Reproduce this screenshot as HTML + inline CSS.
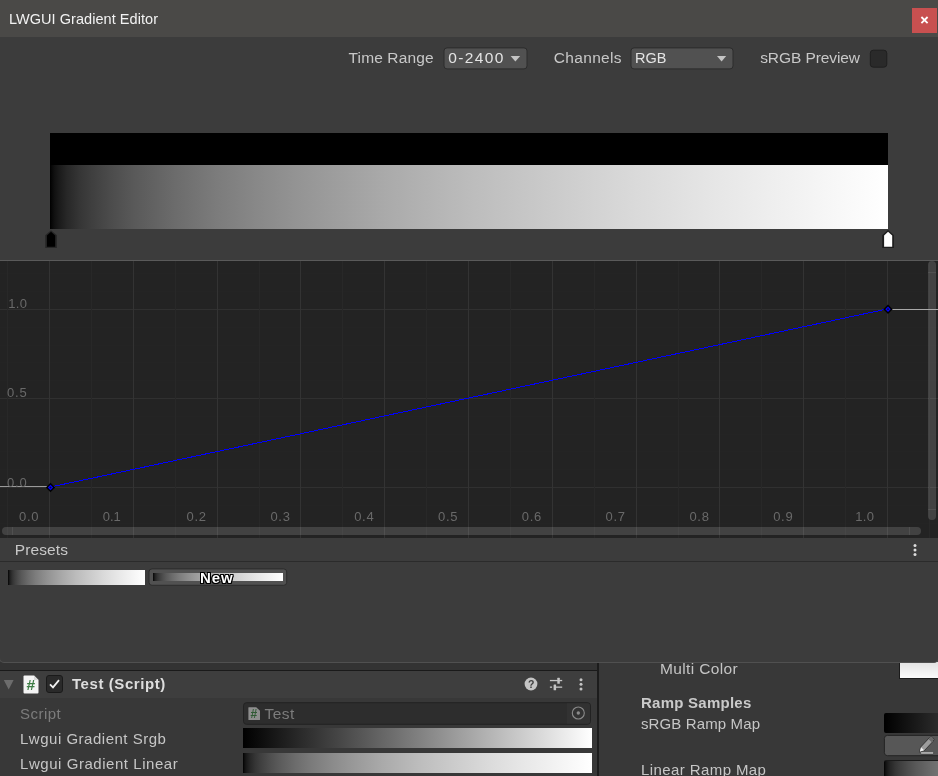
<!DOCTYPE html>
<html>
<head>
<meta charset="utf-8">
<title>LWGUI Gradient Editor</title>
<style>
html,body{margin:0;padding:0;}
body{width:938px;height:776px;overflow:hidden;background:#383838;position:relative;font-family:"Liberation Sans",sans-serif;color:#c8c8c8;}
.abs{position:absolute;}
.t{position:absolute;white-space:nowrap;line-height:1;}
/* ---- inspector (behind) ---- */
#insp-left{left:0;top:662px;width:597px;height:114px;background:#383838;border-top:8px solid #333;box-sizing:border-box;}
#insp-div{left:597px;top:662px;width:2px;height:114px;background:#1c1c1c;}
#insp-right{left:599px;top:662px;width:338px;height:114px;background:#383838;}
#comp-head{left:0;top:670px;width:597px;height:27px;background:#3e3e3e;border-top:1px solid #1a1a1a;}
/* ---- popup window ---- */
#win{left:-1px;top:0;width:940px;height:663px;background:#3c3c3c;border:1px solid #505050;border-top:none;border-bottom-left-radius:5px;border-bottom-right-radius:5px;box-sizing:border-box;}
#titlebar{left:0;top:0;width:938px;height:37px;background:#4a4947;}
#close{left:912px;top:8px;width:25px;height:25px;background:#c85050;}
#graph{left:0;top:260px;width:938px;height:278px;background:#232323;border-top:1px solid #5a5a5a;box-sizing:border-box;overflow:hidden;}
.gl{position:absolute;color:#696969;font-size:13px;white-space:nowrap;line-height:1;}
</style>
</head>
<body>
<div id="root" style="position:absolute;left:0;top:0;width:938px;height:776px;overflow:hidden;will-change:transform;">

<!-- inspector behind -->
<div class="abs" id="insp-left"></div>
<div class="abs" id="insp-right"></div>
<div class="abs" id="insp-div"></div>
<div class="abs" id="comp-head"></div>


<!-- inspector content -->
<svg class="abs" style="left:3.4px;top:679px" width="12" height="12" viewBox="0 0 12 12"><path d="M0.8 1 H10.6 L5.7 10.6 Z" fill="#6c6c6c"/></svg>
<svg class="abs" style="left:23px;top:675px" width="17" height="19" viewBox="0 0 17 19"><path d="M1.5 0.5 H11 L15.5 5 V17.5 Q15.5 18.5 14.5 18.5 H1.5 Q0.5 18.5 0.5 17.5 V1.5 Q0.5 0.5 1.5 0.5 Z" fill="#f4f4f4"/><path d="M11 0.5 L15.5 5 H11 Z" fill="#d8d8d8"/><text x="3.4" y="14.9" font-family="Liberation Sans, sans-serif" font-size="15.5" font-weight="700" fill="#3d7d45">#</text></svg>
<div class="abs" style="left:46px;top:675px;width:17px;height:18px;background:#2a2a2a;border:1px solid #1a1a1a;border-radius:3px;box-sizing:border-box;"></div>
<svg class="abs" style="left:46px;top:675px" width="17" height="18" viewBox="0 0 17 18"><path d="M4 9.3 L7 12.3 L13 5.2" stroke="#f0f0f0" stroke-width="1.8" fill="none"/></svg>
<div class="t" style="left:72px;top:676.1px;font-size:15px;font-weight:700;letter-spacing:0.57px;color:#dedede;">Test (Script)</div>
<svg class="abs" style="left:524px;top:677px" width="14" height="14" viewBox="0 0 14 14"><circle cx="7" cy="7" r="6.4" fill="#c4c4c4"/><text x="4.1" y="10.6" font-family="Liberation Sans, sans-serif" font-size="10.5" font-weight="700" fill="#3e3e3e">?</text></svg>
<svg class="abs" style="left:549px;top:677px" width="14" height="14" viewBox="0 0 14 14" fill="#c4c4c4"><rect x="0.9" y="2.9" width="12.3" height="1.3"/><rect x="8.3" y="0.8" width="2.5" height="5.9" rx="0.5"/><rect x="0.9" y="9.5" width="2.2" height="1.3"/><rect x="4.6" y="7.4" width="2.5" height="5.9" rx="0.5"/><rect x="7" y="9.5" width="6.2" height="1.3"/></svg>
<svg class="abs" style="left:577px;top:677px" width="8" height="15" viewBox="0 0 8 15"><circle cx="4" cy="2.7" r="1.5" fill="#c4c4c4"/><circle cx="4" cy="7.3" r="1.5" fill="#c4c4c4"/><circle cx="4" cy="11.9" r="1.5" fill="#c4c4c4"/></svg>

<div class="t" style="left:20px;top:706.0px;font-size:15px;letter-spacing:0.47px;color:#7c7c7c;">Script</div>
<svg class="abs" style="left:240px;top:700px" width="356" height="28" viewBox="240 700 356 28"><rect x="243.5" y="702.7" width="347" height="21.6" rx="3" fill="#2d2d2d" stroke="#222" stroke-width="1"/><path d="M567 703.2 H587.5 Q590 703.2 590 705.7 V721.3 Q590 723.8 587.5 723.8 H567 Z" fill="#323232"/></svg>
<svg class="abs" style="left:248px;top:707px" width="13" height="14" viewBox="0 0 13 14"><path d="M0.9 0.2 H8.2 L12 3.8 V12.6 Q12 13.1 11.5 13.1 H0.9 Q0.4 13.1 0.4 12.6 V0.7 Q0.4 0.2 0.9 0.2 Z" fill="#8e8e8e"/><text x="2.5" y="11" font-family="Liberation Sans, sans-serif" font-size="12" font-weight="700" fill="#2f5a34">#</text></svg>
<div class="t" style="left:264.6px;top:705.6px;font-size:15.5px;letter-spacing:0.4px;color:#7c7c7c;">Test</div>
<svg class="abs" style="left:571px;top:706px" width="14" height="14" viewBox="0 0 14 14"><circle cx="7.3" cy="7" r="6" fill="none" stroke="#8a8a8a" stroke-width="1.1"/><circle cx="7.3" cy="7" r="1.7" fill="#8a8a8a"/></svg>

<div class="t" style="left:20px;top:731.3px;font-size:15px;letter-spacing:0.51px;color:#c6c6c6;">Lwgui Gradient Srgb</div>
<div class="abs" style="left:243px;top:728px;width:349px;height:20px;background:linear-gradient(to right,#000,#fff);"></div>
<div class="t" style="left:20px;top:755.9px;font-size:15px;letter-spacing:0.55px;color:#c6c6c6;">Lwgui Gradient Linear</div>
<div class="abs" style="left:243px;top:753px;width:349px;height:20px;background:linear-gradient(to right,rgb(0,0,0) 0%,rgb(7,7,7) 0.2%,rgb(16,16,16) 0.5%,rgb(25,25,25) 1%,rgb(39,39,39) 2%,rgb(53,53,53) 3.5%,rgb(63,63,63) 5%,rgb(77,77,77) 7.5%,rgb(89,89,89) 10%,rgb(108,108,108) 15%,rgb(124,124,124) 20%,rgb(137,137,137) 25%,rgb(149,149,149) 30%,rgb(170,170,170) 40%,rgb(188,188,188) 50%,rgb(203,203,203) 60%,rgb(218,218,218) 70%,rgb(231,231,231) 80%,rgb(243,243,243) 90%,rgb(255,255,255) 100%);"></div>

<div class="t" style="left:660px;top:660.7px;font-size:15.5px;letter-spacing:0.36px;color:#c4c4c4;">Multi Color</div>
<div class="abs" style="left:899px;top:662px;width:45px;height:17px;background:linear-gradient(to bottom,#e2e2e2,#fafafa);border:1px solid #1a1a1a;border-top:none;box-sizing:border-box;"></div>
<div class="t" style="left:641px;top:695.4px;font-size:15px;font-weight:700;letter-spacing:0.25px;color:#cacaca;">Ramp Samples</div>
<div class="t" style="left:641px;top:715.9px;font-size:15px;letter-spacing:0.12px;color:#c6c6c6;">sRGB Ramp Map</div>
<div class="abs" style="left:884px;top:713px;width:60px;height:20px;border-radius:2px;background:linear-gradient(to right,#000 0,#2b2b2b 54px);"></div>
<svg class="abs" style="left:878px;top:730px" width="60" height="30" viewBox="878 730 60 30">
<rect x="884.4" y="735.4" width="70" height="20.3" rx="3" fill="#575757" stroke="#242424" stroke-width="1"/>
<g transform="translate(919.4 752.2) rotate(-47)">
<path d="M0 0 L4.6 -2.6 H17.5 Q20 -2.6 20 0 Q20 2.6 17.5 2.6 H4.6 Z" fill="#9c9c9c" stroke="#343434" stroke-width="0.9"/>
<path d="M0.6 0 L4.6 -2.2 V2.2 Z" fill="#f0f0f0"/>
<path d="M15.8 -2.2 H17.6 Q19.6 -2.2 19.6 0 Q19.6 2.2 17.6 2.2 H15.8 Z" fill="#6a6a6a"/>
</g>
<rect x="920.5" y="751.8" width="13.2" height="2.3" rx="1" fill="#c6c6c6" stroke="#3a3a3a" stroke-width="0.7"/>
</svg>
<div class="t" style="left:641px;top:761.6px;font-size:15px;letter-spacing:0.41px;color:#c6c6c6;">Linear Ramp Map</div>
<div class="abs" style="left:884px;top:760px;width:60px;height:20px;border-radius:2px;background:linear-gradient(to right,rgb(0,0,0) 0.0px,rgb(7,7,7) 0.6px,rgb(16,16,16) 1.6px,rgb(25,25,25) 3.2px,rgb(39,39,39) 6.4px,rgb(53,53,53) 11.3px,rgb(63,63,63) 16.1px,rgb(77,77,77) 24.1px,rgb(89,89,89) 32.2px,rgb(108,108,108) 48.3px,rgb(124,124,124) 64.4px,rgb(137,137,137) 80.5px,rgb(149,149,149) 96.6px);border-top:1px solid #1a1a1a;box-sizing:border-box;"></div>

<!-- popup -->
<div class="abs" id="win"></div>
<div class="abs" id="titlebar"></div>
<div class="t" id="title" style="left:9px;top:12px;font-size:14.5px;letter-spacing:0.05px;color:#f2f2f2;">LWGUI Gradient Editor</div>
<div class="abs" id="close"></div>
<svg class="abs" style="left:912px;top:8px" width="25" height="25" viewBox="0 0 25 25"><path d="M9.4 9 L15.6 15.2 M15.6 9 L9.4 15.2" stroke="#fff" stroke-width="1.8" fill="none"/></svg>

<!-- toolbar -->
<svg class="abs" style="left:0;top:40px" width="938" height="40" viewBox="0 40 938 40">
<rect x="444" y="47.9" width="83" height="21" rx="3" fill="#515151" stroke="#2c2c2c" stroke-width="1"/>
<rect x="631" y="47.9" width="102" height="21" rx="3" fill="#515151" stroke="#2c2c2c" stroke-width="1"/>
<rect x="870.3" y="50.2" width="16.5" height="17" rx="3" fill="#2a2a2a" stroke="#1f1f1f" stroke-width="1"/>
<path d="M510.6 56.1 H520.2 L515.4 61.5 Z" fill="#c4c4c4"/>
<path d="M717 56.1 H726.2 L721.6 61.5 Z" fill="#c4c4c4"/>
</svg>
<div class="t" style="left:348.6px;top:50.3px;font-size:15.5px;letter-spacing:0.12px;">Time Range</div>
<div class="t" style="left:448.3px;top:49.6px;font-size:15.5px;letter-spacing:1.37px;color:#e4e4e4;">0-2400</div>
<div class="t" style="left:553.8px;top:50.3px;font-size:15.5px;letter-spacing:0.33px;">Channels</div>
<div class="t" style="left:634.6px;top:49.6px;font-size:15.5px;color:#e4e4e4;transform:scaleX(0.935);transform-origin:0 0;">RGB</div>
<div class="t" style="left:760.2px;top:50.3px;font-size:15.5px;letter-spacing:-0.09px;">sRGB Preview</div>

<!-- gradient preview -->
<div class="abs" style="left:50px;top:133px;width:838px;height:32px;background:#000;"></div>
<div class="abs" style="left:50px;top:165px;width:838px;height:64px;background:linear-gradient(to right,rgb(0,0,0) 0%,rgb(7,7,7) 0.2%,rgb(16,16,16) 0.5%,rgb(25,25,25) 1%,rgb(39,39,39) 2%,rgb(53,53,53) 3.5%,rgb(63,63,63) 5%,rgb(77,77,77) 7.5%,rgb(89,89,89) 10%,rgb(108,108,108) 15%,rgb(124,124,124) 20%,rgb(137,137,137) 25%,rgb(149,149,149) 30%,rgb(170,170,170) 40%,rgb(188,188,188) 50%,rgb(203,203,203) 60%,rgb(218,218,218) 70%,rgb(231,231,231) 80%,rgb(243,243,243) 90%,rgb(255,255,255) 100%);"></div>
<svg class="abs" style="left:44px;top:229px" width="16" height="21" viewBox="0 0 16 21"><path d="M7 1.2 L12.9 6.3 V18.9 H1.2 V6.3 Z" fill="#272727"/><path d="M7 2.8 L11.2 6.6 V17.7 H2.9 V6.6 Z" fill="#000"/></svg>
<svg class="abs" style="left:881px;top:229px" width="16" height="21" viewBox="0 0 16 21"><path d="M7.05 1 L12.9 6.2 V18.9 H1.2 V6.2 Z" fill="#1c1c1c"/><path d="M7.05 2.8 L11.2 6.6 V17.8 H3.1 V6.6 Z" fill="#fff"/></svg>

<!-- curve graph -->
<div class="abs" id="graph">
<svg class="abs" style="left:0;top:0" width="938" height="277" viewBox="0 261 938 277">
<g shape-rendering="crispEdges">
<rect x="0" y="523" width="938" height="1" fill="#242424"/>
<rect x="0" y="505" width="938" height="1" fill="#242424"/>
<rect x="0" y="487" width="938" height="1" fill="#303030"/>
<rect x="0" y="469" width="938" height="1" fill="#242424"/>
<rect x="0" y="451" width="938" height="1" fill="#242424"/>
<rect x="0" y="434" width="938" height="1" fill="#242424"/>
<rect x="0" y="416" width="938" height="1" fill="#242424"/>
<rect x="0" y="398" width="938" height="1" fill="#303030"/>
<rect x="0" y="380" width="938" height="1" fill="#242424"/>
<rect x="0" y="362" width="938" height="1" fill="#242424"/>
<rect x="0" y="345" width="938" height="1" fill="#242424"/>
<rect x="0" y="327" width="938" height="1" fill="#242424"/>
<rect x="0" y="309" width="938" height="1" fill="#303030"/>
<rect x="0" y="291" width="938" height="1" fill="#242424"/>
<rect x="0" y="273" width="938" height="1" fill="#242424"/>
<rect x="7" y="261" width="1" height="277" fill="#282828"/>
<rect x="49" y="261" width="1" height="277" fill="#333333"/>
<rect x="91" y="261" width="1" height="277" fill="#282828"/>
<rect x="133" y="261" width="1" height="277" fill="#333333"/>
<rect x="175" y="261" width="1" height="277" fill="#282828"/>
<rect x="217" y="261" width="1" height="277" fill="#333333"/>
<rect x="259" y="261" width="1" height="277" fill="#282828"/>
<rect x="300" y="261" width="1" height="277" fill="#333333"/>
<rect x="342" y="261" width="1" height="277" fill="#282828"/>
<rect x="384" y="261" width="1" height="277" fill="#333333"/>
<rect x="426" y="261" width="1" height="277" fill="#282828"/>
<rect x="468" y="261" width="1" height="277" fill="#333333"/>
<rect x="510" y="261" width="1" height="277" fill="#282828"/>
<rect x="552" y="261" width="1" height="277" fill="#333333"/>
<rect x="594" y="261" width="1" height="277" fill="#282828"/>
<rect x="636" y="261" width="1" height="277" fill="#333333"/>
<rect x="678" y="261" width="1" height="277" fill="#282828"/>
<rect x="719" y="261" width="1" height="277" fill="#333333"/>
<rect x="761" y="261" width="1" height="277" fill="#282828"/>
<rect x="803" y="261" width="1" height="277" fill="#333333"/>
<rect x="845" y="261" width="1" height="277" fill="#282828"/>
<rect x="887" y="261" width="1" height="277" fill="#333333"/>
<rect x="929" y="261" width="1" height="277" fill="#282828"/>
</g>
<rect x="2" y="527" width="919" height="8" rx="4" fill="#fff" fill-opacity="0.145"/>
<rect x="12" y="527" width="1" height="8" fill="#fff" fill-opacity="0.08" shape-rendering="crispEdges"/>
<rect x="909" y="527" width="1" height="8" fill="#fff" fill-opacity="0.08" shape-rendering="crispEdges"/>
<rect x="928" y="261" width="8" height="259" rx="4" fill="#fff" fill-opacity="0.145"/>
<rect x="928" y="272" width="8" height="1" fill="#fff" fill-opacity="0.08" shape-rendering="crispEdges"/>
<rect x="928" y="509" width="8" height="1" fill="#fff" fill-opacity="0.08" shape-rendering="crispEdges"/>
<rect x="0" y="486" width="47" height="1" fill="#9a9a9a" shape-rendering="crispEdges"/>
<rect x="892" y="309" width="46" height="1" fill="#a8a8a8" shape-rendering="crispEdges"/>
<line x1="50.5" y1="487.0" x2="888" y2="308.8" stroke="#0000ff" stroke-width="1" shape-rendering="crispEdges"/>
<path d="M50.5 482.8 L55.2 487.5 L50.5 492.2 L45.8 487.5 Z" fill="#000"/>
<path d="M50.5 484.8 L53.2 487.5 L50.5 490.2 L47.8 487.5 Z" fill="#0000ff"/>
<path d="M50.5 486.4 L51.6 487.5 L50.5 488.6 L49.4 487.5 Z" fill="#0a0a30"/>
<path d="M888 304.5 L892.7 309.2 L888 313.9 L883.3 309.2 Z" fill="#000"/>
<path d="M888 306.5 L890.7 309.2 L888 311.9 L885.3 309.2 Z" fill="#0000ff"/>
<path d="M888 308.09999999999997 L889.1 309.2 L888 310.3 L886.9 309.2 Z" fill="#0a0a30"/>
</svg>
<div class="gl" style="left:8.3px;top:36.0px;letter-spacing:0.3px;">1.0</div>
<div class="gl" style="left:6.9px;top:125.0px;letter-spacing:0.9px;">0.5</div>
<div class="gl" style="left:6.9px;top:215.0px;letter-spacing:0.9px;">0.0</div>
<div class="gl" style="left:19.0px;top:249.0px;letter-spacing:0.7px;">0.0</div>
<div class="gl" style="left:102.8px;top:249.0px;letter-spacing:-0.1px;">0.1</div>
<div class="gl" style="left:186.6px;top:249.0px;letter-spacing:0.7px;">0.2</div>
<div class="gl" style="left:270.4px;top:249.0px;letter-spacing:0.7px;">0.3</div>
<div class="gl" style="left:354.2px;top:249.0px;letter-spacing:0.7px;">0.4</div>
<div class="gl" style="left:438.0px;top:249.0px;letter-spacing:0.7px;">0.5</div>
<div class="gl" style="left:521.8px;top:249.0px;letter-spacing:0.7px;">0.6</div>
<div class="gl" style="left:605.6px;top:249.0px;letter-spacing:0.7px;">0.7</div>
<div class="gl" style="left:689.4px;top:249.0px;letter-spacing:0.7px;">0.8</div>
<div class="gl" style="left:773.2px;top:249.0px;letter-spacing:0.7px;">0.9</div>
<div class="gl" style="left:855.3px;top:249.0px;letter-spacing:0.3px;">1.0</div>
</div>

<!-- presets -->
<div class="abs" style="left:0;top:561px;width:938px;height:1px;background:#2b2b2b;"></div>
<div class="t" style="left:14.8px;top:541.6px;font-size:15.5px;letter-spacing:0.1px;">Presets</div>
<svg class="abs" style="left:911px;top:542px" width="8" height="16" viewBox="0 0 8 16"><circle cx="4" cy="3.4" r="1.5" fill="#dcdcdc"/><circle cx="4" cy="8" r="1.5" fill="#dcdcdc"/><circle cx="4" cy="12.5" r="1.5" fill="#dcdcdc"/></svg>
<div class="abs" style="left:8px;top:570px;width:137px;height:15px;background:linear-gradient(to right,rgb(0,0,0) 0%,rgb(7,7,7) 0.2%,rgb(16,16,16) 0.5%,rgb(25,25,25) 1%,rgb(39,39,39) 2%,rgb(53,53,53) 3.5%,rgb(63,63,63) 5%,rgb(77,77,77) 7.5%,rgb(89,89,89) 10%,rgb(108,108,108) 15%,rgb(124,124,124) 20%,rgb(137,137,137) 25%,rgb(149,149,149) 30%,rgb(170,170,170) 40%,rgb(188,188,188) 50%,rgb(203,203,203) 60%,rgb(218,218,218) 70%,rgb(231,231,231) 80%,rgb(243,243,243) 90%,rgb(255,255,255) 100%);"></div>
<svg class="abs" style="left:140px;top:560px" width="160" height="35" viewBox="140 560 160 35"><rect x="149" y="568.9" width="137.7" height="16.4" rx="3" fill="#515151" stroke="#2c2c2c" stroke-width="1"/></svg>
<div class="abs" style="left:153px;top:573px;width:130px;height:8px;background:linear-gradient(to right,rgb(0,0,0) 0%,rgb(7,7,7) 0.2%,rgb(16,16,16) 0.5%,rgb(25,25,25) 1%,rgb(39,39,39) 2%,rgb(53,53,53) 3.5%,rgb(63,63,63) 5%,rgb(77,77,77) 7.5%,rgb(89,89,89) 10%,rgb(108,108,108) 15%,rgb(124,124,124) 20%,rgb(137,137,137) 25%,rgb(149,149,149) 30%,rgb(170,170,170) 40%,rgb(188,188,188) 50%,rgb(203,203,203) 60%,rgb(218,218,218) 70%,rgb(231,231,231) 80%,rgb(243,243,243) 90%,rgb(255,255,255) 100%);"></div>
<div class="t" id="newlbl" style="left:200px;top:570.3px;font-size:15px;font-weight:700;letter-spacing:0.9px;color:#fff;text-shadow:-1px -1px 0 #000,1px -1px 0 #000,-1px 1px 0 #000,1px 1px 0 #000,0 1px 0 #000,0 -1px 0 #000,1px 0 0 #000,-1px 0 0 #000;">New</div>

</div>
</body>
</html>
